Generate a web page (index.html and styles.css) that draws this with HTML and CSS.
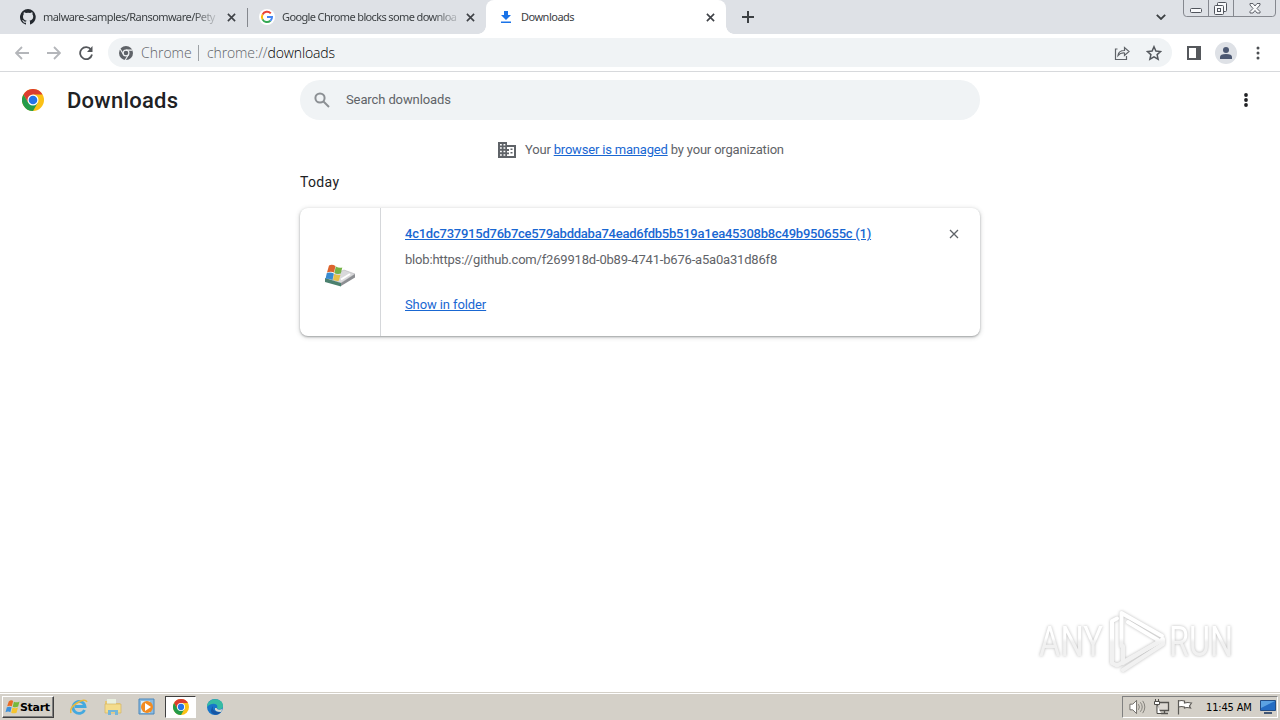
FILE: index.html
```html
<!DOCTYPE html>
<html lang="en">
<head>
<meta charset="utf-8">
<title>Downloads</title>
<link rel="stylesheet" href="styles.css">
</head>
<body>
<svg class="defs" width="0" height="0">
  <defs>
    <symbol id="chrome" viewBox="0 0 24 24">
      <circle cx="12" cy="12" r="12" fill="#fbc116"/>
      <path d="M12 6h10.400A12 12 0 0 0 1.600 6l5.200 9z" fill="#dc3d30"/>
      <path d="M6.800 15 1.600 6A12 12 0 0 0 12 24l5.200-9z" fill="#249b4a"/>
      <circle cx="12" cy="12" r="6" fill="#fff"/>
      <circle cx="12" cy="12" r="4.700" fill="#2574e8"/>
    </symbol>
    <symbol id="close" viewBox="0 0 10 10"><path d="m1 1 8 8m0-8-8 8"/></symbol>
    <symbol id="flag" viewBox="0 0 16 16">
      <path d="M4 2Q6.500 0 8.700 1.500L7.300 7.300Q5 6 2.300 7.300z" fill="#e96b24"/>
      <path d="M9.500 2.300q3 1.500 6-.2L14 7.500Q11.500 9 8.200 7.800z" fill="#76b83b"/>
      <path d="M2 8.300q2.500-1.400 5 0L5.700 13.500Q3.500 12 .5 13.500z" fill="#3c91dc"/>
      <path d="M8 8.600q3 1.500 5.800-.1L12.300 14q-2.800 1.500-5.700.1z" fill="#f5c42e"/>
    </symbol>
  </defs>
</svg>

<header class="tabs">
  <div class="tab tab-first">
    <svg class="favicon" viewBox="0 0 16 16"><path fill="#24292f" d="M8 0a8 8 0 0 0-2.500 15.600c.4.100.5-.2.5-.4v-1.500c-2.200.5-2.700-1-2.700-1-.4-.9-.9-1.200-.9-1.200-.7-.5.100-.5.100-.5.800.100 1.200.8 1.200.8.700 1.200 1.900.9 2.400.7.100-.5.300-.9.500-1.100-1.800-.2-3.600-.9-3.600-4 0-.9.300-1.600.8-2.100-.1-.2-.4-1 .1-2.100 0 0 .7-.2 2.200.8a7.500 7.500 0 0 1 4 0c1.500-1 2.200-.8 2.200-.8.4 1.100.2 1.900.1 2.100.5.600.8 1.300.8 2.100 0 3.100-1.900 3.800-3.700 4 .3.300.5.800.5 1.500v2.200c0 .2.100.5.500.400A8 8 0 0 0 8 0"/></svg>
    <span class="tab-title t1">malware-samples/Ransomware/Pety</span>
    <svg class="x"><use href="#close"/></svg>
  </div>
  <div class="tab tab-second">
    <svg class="favicon" viewBox="0 0 16 16"><circle cx="8" cy="8" r="8" fill="#fff"/><g fill="none" stroke-width="2"><path d="M11.800 4.400A5.100 5.100 0 0 0 3.500 5.600" stroke="#ea4335"/><path d="M3.500 5.600a5.100 5.100 0 0 0 0 4.800" stroke="#fbbc05"/><path d="M3.500 10.400a5.100 5.100 0 0 0 7.900 1.400" stroke="#34a853"/><path d="M11.400 11.800A5 5 0 0 0 13 8H8" stroke="#4285f4"/></g></svg>
    <span class="tab-title t2">Google Chrome blocks some downloa</span>
    <svg class="x"><use href="#close"/></svg>
  </div>
  <div class="tab tab-active">
    <svg class="favicon" viewBox="0 0 16 16"><path fill="#1a73e8" d="M6 2h4v4h3L8 11 3 6h3zM3 12.500h10V14H3z"/></svg>
    <span class="tab-title t3">Downloads</span>
    <svg class="x"><use href="#close"/></svg>
  </div>
  <svg class="plus" viewBox="0 0 12 12"><path d="M6 0v12M0 6h12"/></svg>
  <svg class="chevron" viewBox="0 0 10 6"><path d="m.8.8 4.200 4.200L9.200.8"/></svg>
  <svg class="winbuttons" viewBox="0 0 94 18">
    <path d="M.5 0v13q0 3.500 3 3.500h86q3 0 3-3.500V0M25.500 0v16M50.500 0v16" fill="none" stroke="#85888f"/>
    <g fill="#f8f9fb" stroke="#50545c"><rect x="7.500" y="8.500" width="11" height="4" rx="1"/><rect x="34.500" y="2.500" width="9" height="9" rx="1"/><rect x="31.500" y="5.500" width="9" height="9" rx="1"/><rect x="34.500" y="8.500" width="3" height="3"/>
    <path d="M67 3.500h3l2 2.500 2-2.500h3v1.500L74 8.500l3 3V13h-3l-2-2.500L70 13h-3v-1.500l3-3L67 5z" stroke-width=".9"/></g>
  </svg>
</header>

<nav class="toolbar">
  <svg class="nav" viewBox="0 0 14 14" stroke="#b4b6ba"><path d="M14 7H1M7 1 1 7l6 6"/></svg>
  <svg class="nav nav-fwd" viewBox="0 0 14 14" stroke="#b4b6ba"><path d="M0 7h13M7 1l6 6-6 6"/></svg>
  <svg class="nav nav-reload" viewBox="0 0 14 14" stroke="#54575b"><path d="M12 3.600A6 6 0 1 0 13 8.500"/><path d="M13.500 0v6H8z" fill="#54575b" stroke="none"/></svg>
  <div class="omnibox">
    <svg class="omni-icon" viewBox="0 0 14 14"><circle cx="7" cy="7" r="7" fill="#5f6368"/><circle cx="7" cy="7" r="2.900" fill="none" stroke="#f1f3f4" stroke-width="1.200"/><path d="M7 4.100h6.500M4.500 8.500 1.200 3M9.500 8.500 6.300 14" stroke="#f1f3f4" stroke-width="1.100"/></svg>
    <span class="origin">Chrome</span><i class="omni-sep"></i><span class="url">chrome://<b>downloads</b></span>
    <svg class="share" viewBox="0 0 16 16"><path d="M3.500 4H1.500v10.500h11V11M4 10.500q.5-5 6.500-5V2.500L15 6.500l-4.500 4V8Q6.500 7.500 4 10.500z"/></svg>
    <svg class="star" viewBox="0 0 16 16"><path d="m8 1.700 1.900 4.300 4.700.5-3.500 3.100 1 4.600L8 11.800l-4.100 2.400 1-4.600L1.400 6.500 6.100 6z"/></svg>
  </div>
  <svg class="panel" viewBox="0 0 14 14"><path d="M0 0h14v14H0zM2 2v10h7V2z" fill="#55585c" fill-rule="evenodd"/></svg>
  <svg class="profile" viewBox="0 0 22 22"><circle cx="11" cy="11" r="11" fill="#dee1e6"/><circle cx="11" cy="8" r="3" fill="#4c5872"/><path d="M5 17v-2q0-3 6-3t6 3v2z" fill="#4c5872"/></svg>
  <svg class="dots dots-bar" viewBox="0 0 4 14"><circle cx="2" cy="2" r="1.500"/><circle cx="2" cy="7" r="1.500"/><circle cx="2" cy="12" r="1.500"/></svg>
</nav>

<main>
  <section class="page-head">
    <svg class="logo"><use href="#chrome"/></svg>
    <h1>Downloads</h1>
    <div class="search">
      <svg class="lens" viewBox="0 0 16 16"><circle cx="6" cy="6" r="4.600"/><path d="m9.500 9.500 5.500 5.500"/></svg>
      <span class="search-text">Search downloads</span>
    </div>
    <svg class="dots dots-page" viewBox="0 0 4 14"><circle cx="2" cy="2" r="1.900"/><circle cx="2" cy="7" r="1.900"/><circle cx="2" cy="12" r="1.900"/></svg>
  </section>
  <p class="managed">
    <svg class="building" viewBox="0 0 18 16"><path fill="#5f6368" fill-rule="evenodd" d="M0 0h9v3h9v13H0zM2 2v1.500h1.800V2zM5.500 2v1.500h1.800V2zM2 5.300v1.500h1.800V5.300zM5.500 5.300v1.500h1.800V5.300zM2 8.800v1.500h1.800V8.800zM5.500 8.800v1.500h1.800V8.800zM2 12.300v1.500h1.800v-1.500zM5.500 12.300v1.500h1.800v-1.500zM9 5v2h2v2H9v1.500h2v1.700H9V14h7V5zM12.500 6.500h2V8h-2zM12.500 10h2v1.600h-2z"/></svg>
    <span class="managed-text">Your <a>browser is managed</a> by your organization</span>
  </p>
  <h2>Today</h2>
  <article class="card">
    <div class="file-icon">
      <svg width="32" height="26" viewBox="0 0 32 26"><path d="m2 15 18-8 11 4-14 9z" fill="#d9d9db" stroke="#b5b5b8" stroke-width=".6"/><path d="m17 20 14-9v3.500L17 23z" fill="#8c8e92"/><path d="m1 15 16 5v3.500L1 19z" fill="#4b806e"/><path d="m17 16.500 9-5.500" stroke="#fff" stroke-width="2"/><path d="M5 2.500q3-1.500 6.500.5l-1.500 6.500Q7 8 3 9.500z" fill="#dc642e"/><path d="M11.800 3.500q3.500 2 6.500 1l-1.500 6q-3.500 1-6.500-.5z" fill="#75b346"/><path d="M2.800 10q4-1 7 .5l-1.300 6.500q-4-2-7-1z" fill="#398bd0"/><path d="M10.300 11q3 1.500 6.200.8l-1.700 6q-3 .5-5.800-1z" fill="#e7c048"/></svg>
    </div>
    <div class="file-info">
      <a class="filename">4c1dc737915d76b7ce579abddaba74ead6fdb5b519a1ea45308b8c49b950655c (1)</a>
      <span class="source">blob:https://github.com/f269918d-0b89-4741-b676-a5a0a31d86f8</span>
      <a class="show">Show in folder</a>
    </div>
    <svg class="remove"><use href="#close"/></svg>
  </article>
  <svg class="watermark" viewBox="0 0 210 72">
    <defs><linearGradient id="fade" gradientUnits="userSpaceOnUse" x1="0" y1="34" x2="0" y2="38"><stop stop-color="#fff"/><stop offset="1" stop-color="#f1f1f1"/></linearGradient></defs>
    <g class="wm-shape">
      <path d="M85.500 42V9L126 32"/>
      <path d="M92 18 122 36"/>
      <path d="M81 14.500 76 17v42l5 2.500 43-24"/>
      <path d="M87 66 127 40v-5L87 59V42"/>
      <text x="3" y="52" textLength="64" lengthAdjust="spacingAndGlyphs">ANY</text>
      <text x="133" y="52" textLength="64" lengthAdjust="spacingAndGlyphs">RUN</text>
    </g>
  </svg>
</main>

<footer class="taskbar">
  <div class="start"><svg><use href="#flag"/></svg><span>Start</span></div>
  <div class="quick">
    <svg viewBox="0 0 18 18"><path d="M14.500 12A6 6 0 1 1 15 8.500H5" fill="none" stroke="#44a9df" stroke-width="2.800"/><path d="M1 15Q-1 10 7 5t10-1" fill="none" stroke="#e8b93f" stroke-width="1.500"/></svg>
    <svg viewBox="0 0 18 18"><path d="M1 3h6l1 2h8v10H1z" fill="#e8c875"/><path d="M3 1h9v9H3z" fill="#e9f0df"/><path d="M1 6h16v9H1z" fill="#f4dc8c" stroke="#d2b666" stroke-width=".7"/><path d="M4 17v-5h10v5h-3v-3H7v3z" fill="#75b6d9"/></svg>
    <svg viewBox="0 0 18 18"><path d="M1 1h15v15H1z" fill="#8bbbe0" stroke="#4b87bb"/><path d="M3 3h9v12H3z" fill="#d9edf8"/><circle cx="9" cy="9" r="6" fill="#f28b20"/><path d="m7 5 6 4-6 4z" fill="#fff"/></svg>
    <div class="task-active"><svg><use href="#chrome"/></svg></div>
    <svg viewBox="0 0 18 18"><circle cx="9" cy="9" r="8" fill="#1876c9"/><path d="M1 9C1-1 17-1 17 8c0 4-5 4-6 2 2-5-6-6-10-1z" fill="#36bba3"/><path d="M7 8q-2 6 8 6-3 4-8 2-4-3 0-8z" fill="#1756a5"/><path d="M10.500 10q1 3 6 1l-1.500 3q-7 0-6-4z" fill="#d6d9d2"/></svg>
  </div>
  <div class="tray">
    <svg class="tray-sound" viewBox="0 0 18 16"><path d="M1 5h3l4-4v14l-4-4H1z" fill="#fff" stroke="#6b6864"/><path d="M10 5q2 3 0 6M12 3q4 5 0 10M14.500 1.500q4.500 6.500 0 13" fill="none" stroke="#817e78"/></svg>
    <svg class="tray-net" viewBox="0 0 17 16"><path d="M4.500 3.500h11v8h-11zM8 14.500h7M11.500 12v2.500" fill="#ddd9d3" stroke="#55534f" stroke-width="1.300"/><path d="M1.500 2.500h5v3h-5zM2.500 0v2.500M5.500 0v2.500M4 6v8.500h4" fill="#fff" stroke="#4f4d49"/></svg>
    <svg class="tray-flag" viewBox="0 0 17 16"><path d="M2.500 1v14.500M2.500 2q3-1 6 0v2q3-1 7 0l-2 3 1 2q-4-1-6 0V8q-3-1-6 0" fill="#fff" stroke="#5d5b57" stroke-width="1.200"/></svg>
    <span>11:45 AM</span>
    <svg class="desk" viewBox="0 0 16 14"><path d="M.5.500h15v10H.5z" fill="#246cc3" stroke="#234d86"/><path d="M1 1h14L1 8z" fill="#5ba2e2"/><path d="M4 13h8" stroke="#415674" stroke-width="2"/></svg>
  </div>
</footer>
</body>
</html>
```
FILE: styles.css
```css
* { box-sizing: border-box; }
body { margin: 0; width: 1280px; height: 720px; overflow: hidden; display: flex; flex-direction: column; background: #fff; font-family: Roboto, "Liberation Sans", sans-serif; color: #202124; }
svg { flex: none; display: block; }
.defs { position: absolute; }
.tabs { height: 34px; flex: none; display: flex; background: #dee1e6; }
.tab { height: 34px; display: flex; align-items: center; flex: none; font: 11px "Noto Sans", sans-serif; color: #3c4043; }
.tab-first { width: 248px; padding-left: 20px; background: linear-gradient(#85888e, #85888e) 247px 8px / 1px 19px no-repeat; }
.tab-second { width: 238px; padding-left: 11px; }
.tab-active { width: 240px; padding-left: 12px; background: #fff; border-radius: 8px 8px 0 0; position: relative; }
.tab-active::before, .tab-active::after { content: ""; position: absolute; bottom: 0; width: 8px; height: 8px; }
.tab-active::before { left: -8px; background: radial-gradient(circle at 0 0, transparent 7.5px, #fff 8px); }
.tab-active::after { right: -8px; background: radial-gradient(circle at 100% 0, transparent 7.5px, #fff 8px); }
.favicon { width: 16px; height: 16px; }
.tab-title { width: 176px; margin-left: 7px; white-space: nowrap; line-height: 18px; }
.t1 { letter-spacing: -.55px; -webkit-mask-image: linear-gradient(90deg, #000 150px, transparent 178px); }
.t2 { letter-spacing: -.63px; -webkit-mask-image: linear-gradient(90deg, #000 150px, transparent 182px); }
.t3 { letter-spacing: -.5px; width: 184px; }
.x { width: 9px; height: 9px; margin-left: 8px; fill: none; stroke: #3f4247; stroke-width: 1.8; }
.tab-active .x { margin-left: 1px; }
.plus { width: 12px; height: 12px; margin: 11px 0 0 16px; fill: none; stroke: #3c4043; stroke-width: 2; }
.chevron { width: 10px; height: 6px; margin: 14px 17px 0 auto; fill: none; stroke: #3c4043; stroke-width: 1.8; }
.winbuttons { width: 94px; height: 18px; margin-right: 3px; }
.toolbar { height: 38px; flex: none; display: flex; align-items: center; padding-left: 15px; border-bottom: 1px solid #d7d9dc; }
.nav { width: 14px; height: 14px; fill: none; stroke-width: 1.8; }
.nav-fwd { margin-left: 18px; }
.nav-reload { margin-left: 18px; }
.omnibox { display: flex; align-items: center; width: 1064px; height: 29px; margin-left: 15px; padding-left: 11px; border-radius: 15px; background: #f0f3f5; font: 300 14px "Open Sans", sans-serif; color: #5f6368; }
.omni-icon { width: 14px; height: 14px; }
.origin { margin-left: 8px; width: 49px; white-space: nowrap; }
.omni-sep { width: 1px; height: 16px; margin: 0 8px; background: #9da1a5; }
.url { white-space: nowrap; letter-spacing: -.12px; }
.url b { font-weight: 300; color: #000; }
.share { width: 16px; height: 16px; margin-left: auto; fill: none; stroke: #5f6368; stroke-width: 1.2; }
.star { width: 16px; height: 16px; margin: 0 10px 0 16px; fill: none; stroke: #54585d; stroke-width: 1.5; }
.panel { width: 14px; height: 14px; margin-left: 15px; }
.profile { width: 22px; height: 22px; margin-left: 14px; }
.dots { width: 4px; height: 14px; fill: #4c4f53; }
.dots-bar { margin-left: 19px; }
main { height: 620px; flex: none; position: relative; }
.page-head { display: flex; height: 56px; align-items: center; padding-left: 22px; }
.logo { width: 22px; height: 22px; }
h1 { width: 233px; margin: 1px 0 0 23px; font-size: 22px; line-height: 28px; font-weight: 500; letter-spacing: .25px; }
.search { display: flex; align-items: center; width: 680px; height: 40px; padding-left: 14px; background: #f0f3f5; border-radius: 20px; }
.lens { width: 16px; height: 16px; fill: none; stroke: #8c9094; stroke-width: 2; }
.search-text { margin: -2px 0 0 16px; color: #5f6368; font-size: 13px; letter-spacing: -.11px; }
.dots-page { margin-left: 264px; fill: #202124; }
.managed { height: 42px; margin: 0; padding: 13px 0 0 498px; display: flex; align-items: flex-start; color: #5f6368; font-size: 13px; line-height: 17px; letter-spacing: -.185px; }
.building { width: 18px; height: 16px; margin-top: 1px; }
.managed-text { margin-left: 9px; white-space: nowrap; }
a { color: #1967d2; text-decoration: underline; }
h2 { margin: 2px 0 0 300px; height: 36px; font-size: 14px; line-height: 21px; font-weight: 400; letter-spacing: .35px; }
.card { display: flex; width: 680px; height: 128px; margin-left: 300px; border-radius: 8px; background: #fff; box-shadow: 0 1px 2px rgba(60,64,67,.4), 0 1px 4px 1px rgba(60,64,67,.17); }
.file-icon { width: 81px; border-right: 1px solid #d5d7da; display: flex; justify-content: center; align-items: center; padding-top: 8px; }
.file-info { width: 568px; padding: 16px 0 0 24px; display: flex; flex-direction: column; align-items: flex-start; font-size: 13px; line-height: 20px; white-space: nowrap; }
.filename { font-weight: 500; letter-spacing: -.235px; }
.source { color: #5f6368; margin-top: 6px; letter-spacing: -.185px; }
.show { margin-top: 25px; letter-spacing: -.1px; }
.remove { width: 10px; height: 10px; margin-top: 21px; fill: none; stroke: #5f6368; stroke-width: 1.3; }
.watermark { position: absolute; left: 1036px; top: 532px; width: 210px; height: 72px; filter: drop-shadow(0 0 1.5px #bbb); }
.wm-shape { fill: none; stroke: url(#fade); stroke-width: 4; stroke-linejoin: round; stroke-linecap: round; }
.wm-shape text { font: 43px Roboto, sans-serif; fill: url(#fade); stroke: none; }
.taskbar { height: 28px; flex: none; display: flex; align-items: flex-start; padding: 3px 2px 0; border-top: 1px solid #d4d0c8; background: linear-gradient(#fff, #fff) 0 0 / 100% 1px no-repeat #d4d0c8; font-family: "DejaVu Sans Condensed", "DejaVu Sans", sans-serif; color: #000; }
.start { display: flex; align-items: center; width: 52px; height: 22px; padding-left: 2px; background: #d4d0c8; border: 1px solid #fff; border-right-color: #404040; border-bottom-color: #404040; box-shadow: inset -1px -1px #808080; font: 700 11px "DejaVu Sans", sans-serif; letter-spacing: -.3px; }
.start svg { width: 15px; height: 16px; }
.start span { white-space: nowrap; }
.quick { display: flex; align-items: center; margin-left: 16px; }
.quick > svg { width: 18px; height: 18px; margin-right: 16px; }
.task-active { width: 31px; height: 22px; margin: 0 10px 0 -7px; padding: 2px 7px; background: #fff; border: 1px solid #404040; border-right-color: #fff; border-bottom-color: #fff; }
.task-active svg { width: 16px; height: 16px; }
.tray { display: flex; align-items: center; width: 156px; height: 22px; margin-left: auto; padding-left: 6px; border: 1px solid #808080; border-right-color: #fff; border-bottom-color: #fff; font-size: 11px; }
.tray-sound { width: 17px; height: 16px; }
.tray-net { width: 17px; height: 16px; margin-left: 7px; }
.tray-flag { width: 17px; height: 16px; margin-left: 6px; }
.tray span { width: 48px; margin-left: 13px; white-space: nowrap; letter-spacing: -.15px; }
.desk { width: 16px; height: 14px; margin-left: 6px; }
```
